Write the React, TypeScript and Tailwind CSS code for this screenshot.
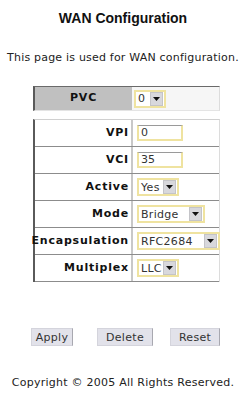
import React from "react";

const font = { fontFamily: '"DejaVu Sans", Verdana, sans-serif' };

function FakeSelect({ value, width }: { value: string; width: string }) {
  return (
    <div
      className={`flex items-center justify-between h-[18px] ${width} border-2 border-[#efe3a0] bg-white pl-[2px] pr-[1px]`}
    >
      <span className="text-[11px] leading-none text-[#333] tracking-[0.3px]">{value}</span>
      <span className="flex items-center justify-center w-[13px] h-[14px] bg-[#d8d8dc] border border-[#c4c4c8]">
        <svg width="7" height="4" viewBox="0 0 7 4">
          <path d="M0 0h7L3.5 4z" fill="#111" />
        </svg>
      </span>
    </div>
  );
}

function TextBox({ value }: { value: string }) {
  return (
    <div className="flex items-center w-[46px] h-[16px] border-2 border-[#efe3a0] border-t-[#9a9a9a] border-t bg-white pl-[2px]">
      <span className="text-[11px] leading-none text-[#333]">{value}</span>
    </div>
  );
}

const rows: { label: string; field: React.ReactNode }[] = [
  { label: "VPI", field: <TextBox value="0" /> },
  { label: "VCI", field: <TextBox value="35" /> },
  { label: "Active", field: <FakeSelect value="Yes" width="w-[42px]" /> },
  { label: "Mode", field: <FakeSelect value="Bridge" width="w-[68px]" /> },
  { label: "Encapsulation", field: <FakeSelect value="RFC2684" width="w-[83px]" /> },
  { label: "Multiplex", field: <FakeSelect value="LLC" width="w-[42px]" /> },
];

export default function App() {
  return (
    <div className="w-[246px] h-[400px] bg-white text-[#222]" style={font}>
      <h1
        className="pt-[10px] text-center text-[14px] font-bold leading-[17px] text-[#111]"
        style={{ fontFamily: '"Liberation Sans", Arial, sans-serif' }}
      >
        WAN Configuration
      </h1>

      <p className="mt-[24px] text-center text-[11px] leading-[13px] tracking-[0.2px] text-[#222]">
        This page is used for WAN configuration.
      </p>

      {/* PVC selector */}
      <div className="mt-[22px] ml-[33px] w-[187px] h-[25px] flex border-l-2 border-t border-l-[#5a5a5a] border-t-[#6a6a6a] border-r border-b border-r-[#dcdcdc] border-b-[#e4e4e4]">
        <div className="w-[97px] bg-[#c0c0c0] flex items-center justify-center text-[11px] font-bold tracking-[0.8px] text-[#111]">
          PVC
        </div>
        <div className="flex-1 bg-[#f6f6f6] flex items-center pl-[2px]">
          <FakeSelect value="0" width="w-[32px]" />
        </div>
      </div>

      {/* Parameters */}
      <div className="mt-[8px] ml-[33px] w-[187px] flex flex-col border-l-2 border-l-[#5a5a5a] border-t border-t-[#d0d0d0] border-r border-r-[#dcdcdc]">
        {rows.map((r) => (
          <div key={r.label} className="flex h-[27px] border-b border-[#8c8c8c]">
            <div className="w-[96px] flex items-center justify-end pr-[2px] text-[11px] font-bold tracking-[0.8px] text-[#111] whitespace-nowrap">
              {r.label}
            </div>
            <div className="flex-1 flex items-center pl-[4px] border-l-2 border-l-[#c8c8c8]">
              {r.field}
            </div>
          </div>
        ))}
      </div>

      {/* Actions */}
      <div className="mt-[46px] flex">
        <button className="ml-[31px] w-[42px] h-[18px] bg-[#e2e2ea] border border-[#d4d4dc] border-r-[#a8a8b0] text-[11px] leading-none tracking-[0.3px] text-[#333]">
          Apply
        </button>
        <button className="ml-[24px] w-[56px] h-[18px] bg-[#e2e2ea] border border-[#d4d4dc] border-r-[#a8a8b0] text-[11px] leading-none tracking-[0.3px] text-[#333]">
          Delete
        </button>
        <button className="ml-[17px] w-[50px] h-[18px] bg-[#e2e2ea] border border-[#d4d4dc] border-r-[#a8a8b0] text-[11px] leading-none tracking-[0.3px] text-[#333]">
          Reset
        </button>
      </div>

      <p className="mt-[30px] text-center text-[11px] leading-[13px] tracking-[0.25px] text-[#222]">
        Copyright © 2005 All Rights Reserved.
      </p>
    </div>
  );
}
